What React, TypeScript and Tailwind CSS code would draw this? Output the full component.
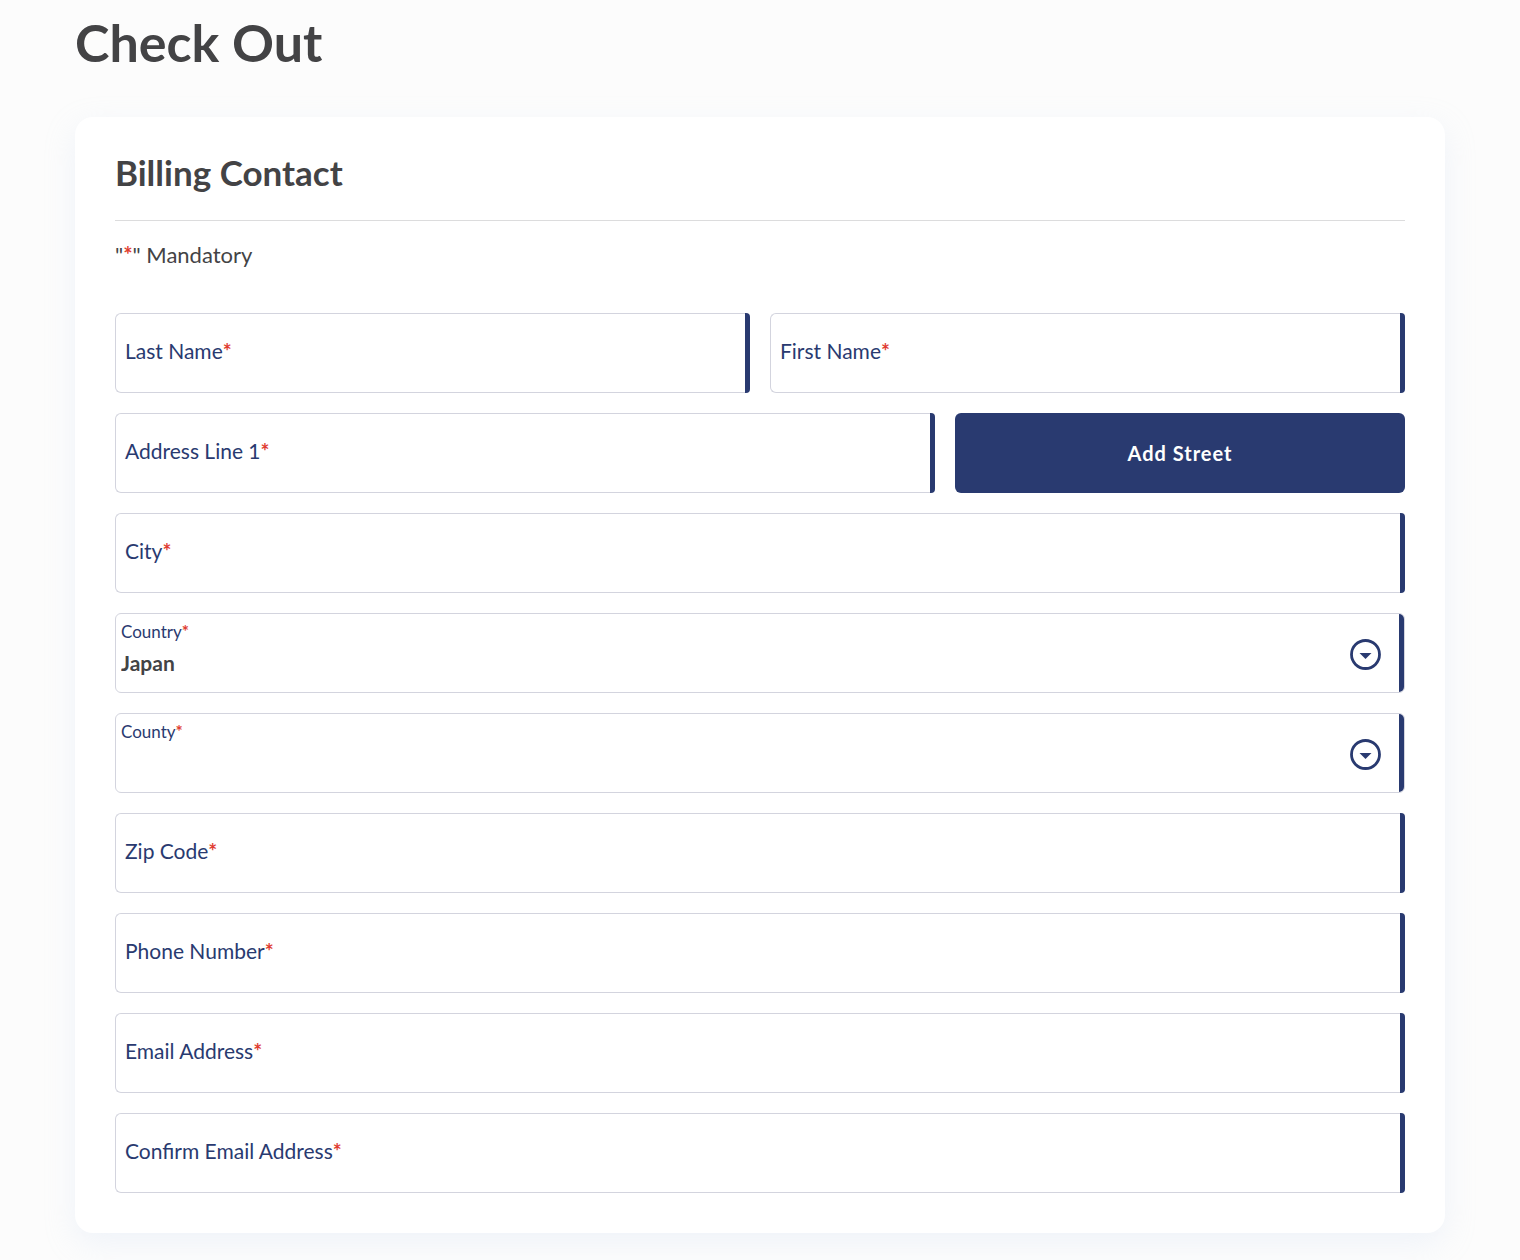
import { useId } from 'react';
import type { ReactNode } from 'react';

interface FieldProps {
    label: string;
    type?: string;
    autoComplete?: string;
}

interface SelectFieldProps {
    label: string;
    options: string[];
}

function Required() {
    return <span className="font-bold text-[#e03c31]">*</span>;
}

function Field({ label, type = 'text', autoComplete }: FieldProps) {
    const id = useId();

    return (
        <div className="grid h-20 grid-cols-[1fr_5px]">
            <input
                id={id}
                type={type}
                autoComplete={autoComplete}
                required
                className="peer col-start-1 row-start-1 w-full rounded-l-md border border-r-0 border-[#d3d4de] bg-white px-2.5 pt-6 text-xl font-bold text-[#434345] outline-none"
            />
            <label
                htmlFor={id}
                className="pointer-events-none col-start-1 row-start-1 self-center pb-1 pl-2.5 text-[21px] leading-7 text-[#293a70] peer-valid:self-start peer-valid:text-base peer-focus:self-start peer-focus:text-base"
            >
                {label}
                <Required />
            </label>
            <span className="col-start-2 row-start-1 rounded-r-[4px] bg-[#293a70]" />
        </div>
    );
}

function SelectField({ label, options }: SelectFieldProps) {
    const id = useId();

    return (
        <div className="grid h-20 grid-cols-[1fr_auto] overflow-hidden rounded-md border border-[#d3d4de] bg-white">
            <select
                id={id}
                required
                className="col-span-2 col-start-1 row-start-1 w-full appearance-none border-r-[5px] border-[#293a70] bg-transparent pt-5 pl-[5px] text-[21px] font-bold text-[#434345] outline-none"
            >
                {options.map((option) => (
                    <option key={option} value={option}>
                        {option}
                    </option>
                ))}
            </select>
            <label
                htmlFor={id}
                className="pointer-events-none col-start-1 row-start-1 self-start pt-1.5 pl-[5px] text-[17px] leading-6 text-[#293a70]"
            >
                {label}
                <Required />
            </label>
            <svg
                viewBox="0 0 31 31"
                className="pointer-events-none col-start-2 row-start-1 mt-[3px] mr-[23px] h-[31px] w-[31px] self-center"
                aria-hidden="true"
            >
                <circle cx="15.5" cy="15.5" r="14" fill="none" stroke="#293a70" strokeWidth="2.8" />
                <path d="M9.5 14h12l-6 6z" fill="#293a70" />
            </svg>
        </div>
    );
}

function Card({ title, children }: { title: string; children: ReactNode }) {
    return (
        <section className="mt-10 rounded-[18px] bg-white px-10 pt-8 pb-10 shadow-[0_10px_30px_rgba(205,220,245,0.25)]">
            <h2 className="border-b border-[#dcdcdd] pb-6 text-[35px] leading-[47px] font-bold">{title}</h2>
            {children}
        </section>
    );
}

export default function App() {
    return (
        <main className="min-h-screen bg-[#fcfcfc] px-[75px] pt-2 pb-7 font-['Lato',sans-serif] text-[#434345]">
            <h1 className="text-[52px] leading-[69px] font-bold">Check Out</h1>
            <Card title="Billing Contact">
                <p className="mt-4 text-[22px] leading-9">
                    "<Required />" Mandatory
                </p>
                <form className="mt-10 grid gap-5">
                    <div className="grid grid-cols-2 gap-5">
                        <Field label="Last Name" autoComplete="family-name" />
                        <Field label="First Name" autoComplete="given-name" />
                    </div>
                    <div className="grid grid-cols-[1fr_450px] gap-5">
                        <Field label="Address Line 1" autoComplete="address-line1" />
                        <button type="button" className="rounded-md bg-[#293a70] text-xl font-bold tracking-wider text-white">
                            Add Street
                        </button>
                    </div>
                    <Field label="City" autoComplete="address-level2" />
                    <SelectField label="Country" options={['Japan']} />
                    <SelectField label="County" options={['']} />
                    <Field label="Zip Code" autoComplete="postal-code" />
                    <Field label="Phone Number" type="tel" autoComplete="tel" />
                    <Field label="Email Address" type="email" autoComplete="email" />
                    <Field label="Confirm Email Address" type="email" autoComplete="email" />
                </form>
            </Card>
        </main>
    );
}
